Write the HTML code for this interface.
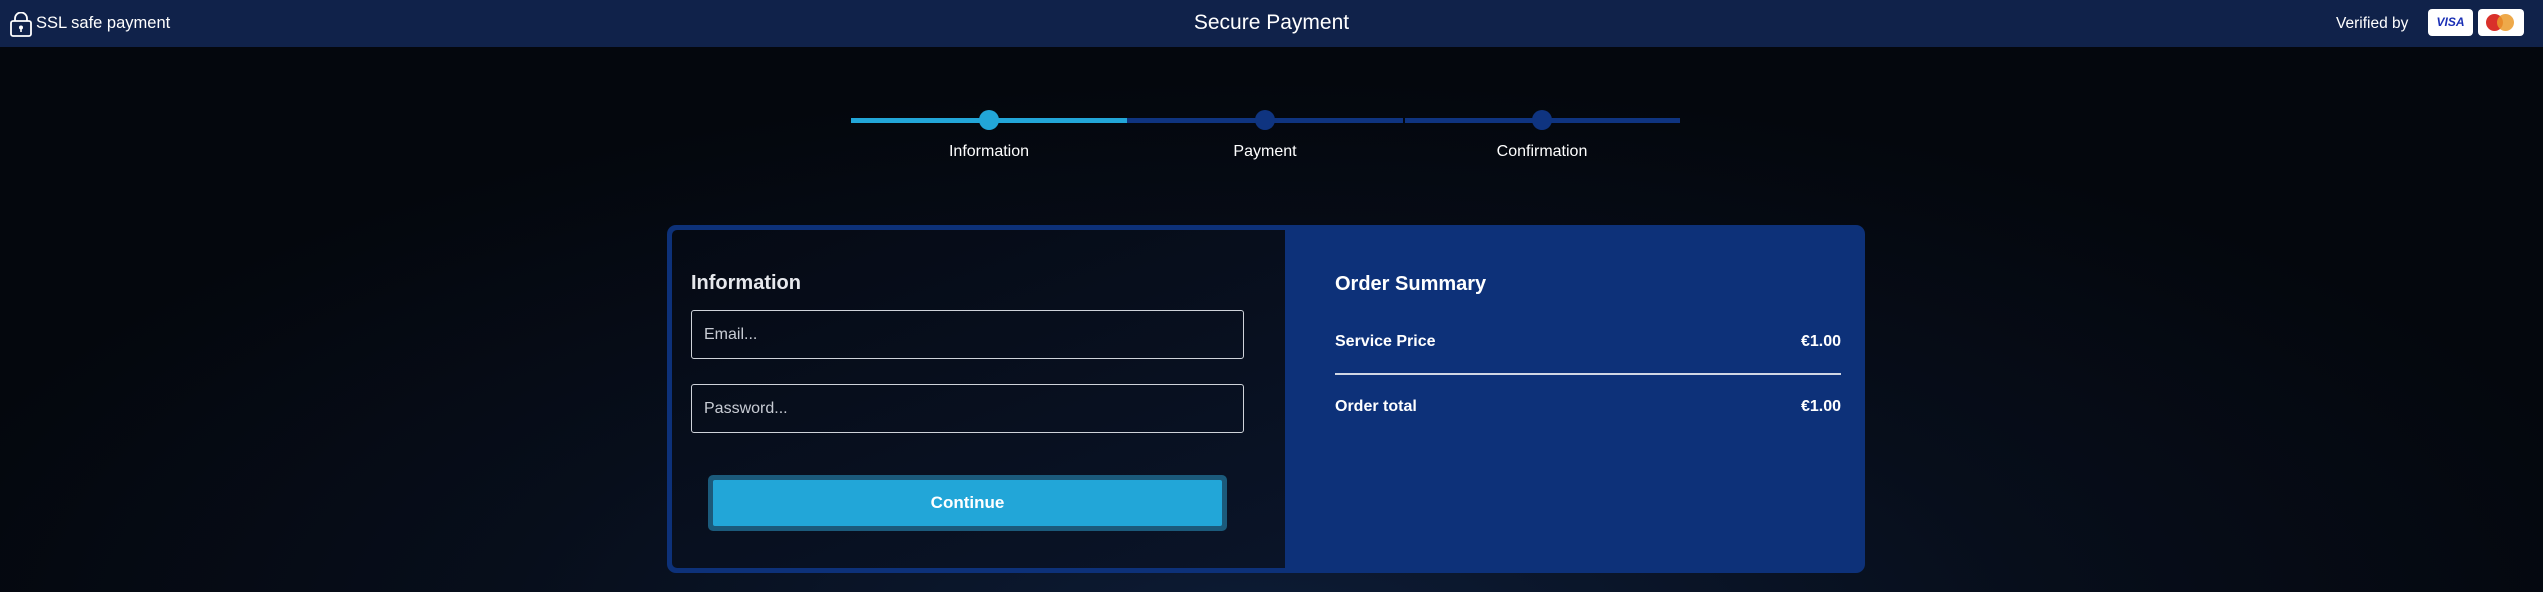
<!DOCTYPE html>
<html><head><meta charset="utf-8"><style>
*{margin:0;padding:0;box-sizing:border-box}
body{width:2543px;height:592px;overflow:hidden;font-family:"Liberation Sans",sans-serif;color:#fff;
background:radial-gradient(ellipse 1400px 560px at 1270px 640px,#0d1c36 0%,#070e1b 55%,#04070d 100%);position:relative}
.hdr{position:absolute;left:0;top:0;width:2543px;height:47px;background:#10224a}
.abs{position:absolute}
.lbl{position:absolute;font-size:16px;transform:translateX(-50%);top:143px}
.dot{position:absolute;width:20px;height:20px;border-radius:50%;top:110px;margin-left:-10px}
.seg{position:absolute;top:118px;height:5px}
.card{position:absolute;left:667px;top:225px;width:1198px;height:348px;background:#0d3179;border-radius:9px}
.left{position:absolute;left:5px;top:5px;width:613px;height:338px;background:linear-gradient(160deg,#050a14,#0a1428);border-radius:5px 0 0 5px}
.inp{position:absolute;left:691px;width:553px;height:49px;border:1.5px solid #cfd3da;border-radius:3px;font-size:16px;color:#c8ccd4;padding:15px 12px 0}
.b{font-weight:bold}
</style></head><body>
<div class="hdr"></div>
<svg class="abs" style="left:9px;top:12px" width="24" height="26" viewBox="0 0 24 26"><path d="M6 9V6.5a6 6 0 0 1 12 0V9" fill="none" stroke="#fff" stroke-width="1.8"/><rect x="2" y="9" width="20" height="15" rx="2" fill="none" stroke="#fff" stroke-width="1.8"/><circle cx="12" cy="15.5" r="2" fill="#fff"/><rect x="11.2" y="16" width="1.6" height="4" fill="#fff"/></svg>
<div class="abs" style="left:36px;top:14px;font-size:16.5px">SSL safe payment</div>
<div class="abs" style="left:0;width:2543px;text-align:center;top:11px;font-size:21px">Secure Payment</div>
<div class="abs" style="left:2336px;top:15px;font-size:15.5px">Verified by</div>
<div class="abs" style="left:2428px;top:9px;width:45px;height:27px;background:#fff;border-radius:4px;text-align:center;font:italic bold 12px 'Liberation Sans',sans-serif;color:#1a2fb5;line-height:27px">VISA</div>
<div class="abs" style="left:2478px;top:9px;width:46px;height:27px;background:#fff;border-radius:4px"><div class="abs" style="left:8px;top:5px;width:17px;height:17px;border-radius:50%;background:#d9302a"></div><div class="abs" style="left:19px;top:5px;width:17px;height:17px;border-radius:50%;background:#eb9a2a;opacity:.85"></div></div>

<div class="seg" style="left:851px;width:276px;background:#22a6d8"></div>
<div class="seg" style="left:1127px;width:276px;background:#0f3480"></div>
<div class="seg" style="left:1405px;width:275px;background:#0f3480"></div>
<div class="dot" style="left:989px;background:#22a6d8"></div>
<div class="dot" style="left:1265px;background:#0f3480"></div>
<div class="dot" style="left:1542px;background:#0f3480"></div>
<div class="lbl" style="left:989px">Information</div>
<div class="lbl" style="left:1265px">Payment</div>
<div class="lbl" style="left:1542px">Confirmation</div>

<div class="card"><div class="left"></div></div>
<div class="abs b" style="left:691px;top:272px;font-size:20px;color:#e6e8ec">Information</div>
<div class="inp" style="top:310px">Email...</div>
<div class="inp" style="top:384px">Password...</div>
<div class="abs" style="left:708px;top:475px;width:519px;height:56px;background:#1b5a7b;border-radius:5px"></div>
<div class="abs b" style="left:713px;top:480px;width:509px;height:46px;background:#22a6d8;border-radius:2px;text-align:center;line-height:46px;font-size:17px">Continue</div>

<div class="abs b" style="left:1335px;top:273px;font-size:20px">Order Summary</div>
<div class="abs b" style="left:1335px;top:333px;font-size:16px">Service Price</div>
<div class="abs b" style="left:1741px;width:100px;text-align:right;top:333px;font-size:16px">€1.00</div>
<div class="abs" style="left:1335px;top:373px;width:506px;height:2px;background:#d0d6e4"></div>
<div class="abs b" style="left:1335px;top:398px;font-size:16px">Order total</div>
<div class="abs b" style="left:1741px;width:100px;text-align:right;top:398px;font-size:16px">€1.00</div>
</body></html>
